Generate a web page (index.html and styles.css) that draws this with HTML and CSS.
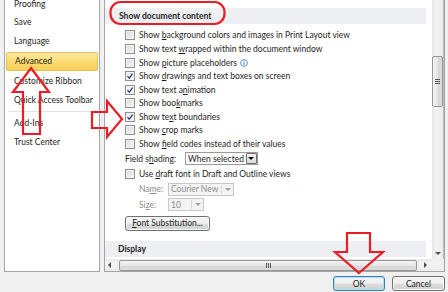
FILE: index.html
```html
<!DOCTYPE html>
<html lang="en">
<head>
    <meta charset="UTF-8">
    <title>Word Options - Advanced</title>
    <link rel="stylesheet" href="styles.css">
</head>
<body>
<div class="panes">
    <div class="nav">
        <ul>
            <li>Proofing</li>
            <li>Save</li>
            <li>Language</li>
            <li class="active">Advanced</li>
            <li>Customize Ribbon</li>
            <li>Quick Access Toolbar</li>
            <li class="sep"></li>
            <li>Add-Ins</li>
            <li>Trust Center</li>
        </ul>
    </div>

    <div class="options">
        <div class="content">
            <div class="band">Show document content</div>

            <div class="checks">
                <div class="row"><span class="box"></span><span>Show <u>b</u>ackground colors and images in Print Layout view</span></div>
                <div class="row"><span class="box"></span><span>Show text <u>w</u>rapped within the document window</span></div>
                <div class="row"><span class="box"></span><span>Show <u>p</u>icture placeholders</span>
                    <svg class="info" width="8" height="8" viewBox="0 0 8 8"><circle cx="4" cy="4" r="3.4" fill="none" stroke="#4a86c8" stroke-width="0.9"/><rect x="3.5" y="3.3" width="1" height="2.8" fill="#4a86c8"/><rect x="3.5" y="1.8" width="1" height="1" fill="#4a86c8"/></svg>
                </div>
                <div class="row"><span class="box checked"><svg width="8" height="8" viewBox="0 0 8 8"><path d="M1.5 4.2 L3.3 6.3 L6.6 1.6" fill="none" stroke="#27406e" stroke-width="1.3"/></svg></span><span>Show <u>d</u>rawings and text boxes on screen</span></div>
                <div class="row"><span class="box checked"><svg width="8" height="8" viewBox="0 0 8 8"><path d="M1.5 4.2 L3.3 6.3 L6.6 1.6" fill="none" stroke="#27406e" stroke-width="1.3"/></svg></span><span>Show text a<u>n</u>imation</span></div>
                <div class="row"><span class="box"></span><span>Show boo<u>k</u>marks</span></div>
                <div class="row"><span class="box checked"><svg width="8" height="8" viewBox="0 0 8 8"><path d="M1.5 4.2 L3.3 6.3 L6.6 1.6" fill="none" stroke="#27406e" stroke-width="1.3"/></svg></span><span>Show te<u>x</u>t boundaries</span></div>
                <div class="row"><span class="box"></span><span>Show <u>c</u>rop marks</span></div>
                <div class="row"><span class="box"></span><span>Show <u>f</u>ield codes instead of their values</span></div>
            </div>

            <div class="field shading">
                <span class="label">Field s<u>h</u>ading:</span>
                <span class="select wide"><span>When selected</span><span class="drop"><span class="tri"></span></span></span>
            </div>

            <div class="row draft"><span class="box"></span><span>Use <u>d</u>raft font in Draft and Outline views</span></div>

            <div class="field sub off">
                <span class="label">Na<u>m</u>e:</span>
                <span class="select name"><span>Courier New</span><span class="drop"><span class="tri"></span></span></span>
            </div>
            <div class="field sub off size">
                <span class="label">Si<u>z</u>e:</span>
                <span class="select small"><span>10</span><span class="drop"><span class="tri"></span></span></span>
            </div>

            <div class="subst"><button class="btn"><u>F</u>ont Substitution...</button></div>

            <div class="band display">Display</div>
        </div>

        <div class="vscroll">
            <div class="thumb">
                <span class="grip"></span>
            </div>
            <div class="arrow-down"><span class="tri"></span></div>
        </div>

        <div class="hscroll">
            <span class="arrow-left"></span>
            <div class="hthumb"><span class="hgrip"></span></div>
            <span class="arrow-right"></span>
        </div>
        <div class="corner"></div>
    </div>
</div>

<div class="buttons">
    <button class="btn default">OK</button>
    <button class="btn">Cancel</button>
</div>

<!-- red annotation marks drawn over the dialog -->
<svg class="marks" width="448" height="292" viewBox="0 0 448 292">
    <g fill="none" stroke="#ec1c24" stroke-width="2.2" stroke-linejoin="miter">
        <rect x="110.5" y="2" width="114" height="22" rx="10"/>
        <polygon points="31,68 49,92 40,92 40,134 23,134 23,92 13,92"/>
        <polygon points="122,119 107,101 107,112 92,112 92,128 107,128 107,137"/>
        <polygon points="359,273 383,252 370,252 370,233 347,233 347,252 335,252"/>
    </g>
</svg>
</body>
</html>
```

FILE: styles.css
```css
* {
    box-sizing: border-box;
}

body {
    margin: 0;
    width: 448px;
    height: 292px;
    overflow: hidden;
    position: relative;
    background-color: #f0f0f0;
    font-family: Lato, "Liberation Sans", sans-serif;
    font-size: 8.5px;
    color: #1e1e1e;
}

u {
    text-decoration-thickness: 1px;
    text-underline-offset: 1px;
}

.panes {
    display: flex;
    gap: 4px;
    height: 272px;
    padding: 0 3px 0 4px;
}

/* left list */

.nav {
    width: 96px;
    background-color: #fff;
    border: 1px solid #a5a5a5;
    border-top: 0;
    overflow: hidden;
}

.nav ul {
    margin: -5px 0 0;
    padding: 0;
    list-style: none;
}

.nav li {
    height: 19px;
    line-height: 19px;
    padding-left: 9px;
    white-space: nowrap;
}

.nav li:first-child {
    height: 18px;
}

.nav li.active {
    height: 19px;
    line-height: 17px;
    margin: 1px;
    padding-left: 8px;
    border: 1px solid #e3bf5a;
    border-radius: 2px;
    background: linear-gradient(#fdeaa0, #fad86b 60%, #f8d15a);
}

.nav li.sep {
    height: 0;
    margin: 1px 4px 2px;
    border-top: 1px solid #e2e2e2;
}

/* right pane */

.options {
    flex: 1;
    display: grid;
    grid-template-columns: 1fr 12px;
    grid-template-rows: 1fr 12px;
    background-color: #fff;
    border: 1px solid #a5a5a5;
    border-top: 0;
}

.content {
    overflow: hidden;
    padding-top: 8px;
    white-space: nowrap;
}

.band {
    height: 16px;
    line-height: 16px;
    margin-right: 6px;
    padding-left: 14px;
    background-color: #eeeff2;
    font-weight: bold;
}

.band.display {
    margin-top: 10px;
    padding-left: 13px;
}

.checks {
    margin-top: 4.7px;
}

.row {
    display: flex;
    align-items: center;
    gap: 4px;
    height: 13.56px;
    padding-left: 20px;
}

.row.draft {
    height: 15px;
}

.box {
    width: 10px;
    height: 10px;
    flex: none;
    display: flex;
    align-items: center;
    justify-content: center;
    border: 1px solid #8e8f8f;
    background: linear-gradient(135deg, #d9d9d9, #f7f7f7);
    box-shadow: inset 0 0 0 1px #f4f4f4;
}

.box.checked {
    background: linear-gradient(135deg, #e6e6e6, #fbfbfb);
}

.info {
    margin-left: -1px;
}

.field {
    display: flex;
    align-items: center;
    height: 16px;
    padding-left: 20px;
}

.field .label {
    width: 60px;
}

.field.sub {
    height: 15px;
    padding-left: 34px;
}

.field.sub .label {
    width: 29px;
}

.field.size {
    height: 16px;
}

.off {
    color: #8c8c8c;
}

.select {
    display: flex;
    align-items: center;
    justify-content: space-between;
    height: 13px;
    padding-left: 2px;
    border: 1px solid #9a9a9a;
    background-color: #fff;
}

.select.wide {
    width: 73px;
}

.select.name {
    width: 66px;
}

.select.small {
    width: 36px;
}

.off .select {
    border-color: #c8c8c8;
    background-color: #f4f4f4;
}

.drop {
    width: 12px;
    height: 11px;
    margin-left: 2px;
    display: flex;
    align-items: center;
    justify-content: center;
    border: 1px solid #707070;
    border-radius: 1px;
    background: linear-gradient(#f3f3f3, #dadada);
}

.off .drop {
    height: 9px;
    border: 0;
    border-left: 1px solid #d6d6d6;
    background: none;
}

.tri {
    width: 0;
    height: 0;
    border-left: 3px solid transparent;
    border-right: 3px solid transparent;
    border-top: 3px solid #000;
}

.off .tri {
    border-top-color: #a0a0a0;
}

.subst {
    margin-top: 3px;
    padding-left: 20px;
}

.btn {
    height: 15px;
    padding: 0;
    font-family: Lato, "Liberation Sans", sans-serif;
    font-size: 8.5px;
    color: #1e1e1e;
    border: 1px solid #707070;
    border-radius: 3px;
    background: linear-gradient(#f2f2f2 45%, #dddddd 55%, #d0d0d0);
    box-shadow: inset 0 0 0 1px #fbfbfb;
}

.subst .btn {
    width: 85px;
}

/* scrollbars */

.vscroll {
    display: flex;
    flex-direction: column;
    align-items: center;
    background: linear-gradient(90deg, #e8e8e8, #f3f3f3 40%, #ececec);
    border-right: 1px solid #b9b9b9;
}

.thumb {
    width: 11px;
    height: 51px;
    margin-top: 56px;
    display: flex;
    align-items: center;
    justify-content: center;
    border: 1px solid #979797;
    border-radius: 2px;
    background: linear-gradient(90deg, #f4f4f4, #e6e6e6 50%, #d7d7d7 52%, #dcdcdc);
}

.grip {
    width: 5px;
    height: 5px;
    background: repeating-linear-gradient(#555 0 1px, transparent 1px 2px);
}

.arrow-down {
    margin-top: auto;
    height: 12px;
    display: flex;
    align-items: center;
}

.arrow-down .tri {
    border-top-color: #4d4d4d;
}

.hscroll {
    display: flex;
    align-items: center;
    padding: 0 1px 0 3px;
    background: linear-gradient(#e8e8e8, #f4f4f4 40%, #ececec);
}

.arrow-left,
.arrow-right {
    width: 0;
    height: 0;
    border-top: 3px solid transparent;
    border-bottom: 3px solid transparent;
}

.arrow-left {
    margin-right: 8px;
    border-right: 3px solid #4d4d4d;
}

.arrow-right {
    margin-left: 7px;
    border-left: 3px solid #4d4d4d;
}

.hthumb {
    width: 298px;
    height: 11px;
    display: flex;
    align-items: center;
    justify-content: center;
    border: 1px solid #979797;
    border-radius: 2px;
    background: linear-gradient(#f4f4f4, #e6e6e6 50%, #d7d7d7 52%, #dcdcdc);
}

.hgrip {
    width: 5px;
    height: 5px;
    background: repeating-linear-gradient(90deg, #555 0 1px, transparent 1px 2px);
}

.corner {
    background-color: #f0f0f0;
}

/* dialog buttons */

.buttons {
    display: flex;
    justify-content: flex-end;
    gap: 7px;
    padding: 4px 3px 0 0;
}

.buttons .btn {
    width: 53px;
}

.buttons .btn.default {
    width: 52px;
    border-color: #3c7fb1;
    box-shadow: inset 0 0 0 1px #a8e0f5;
}

.marks {
    position: absolute;
    left: 0;
    top: 0;
    pointer-events: none;
}
```
